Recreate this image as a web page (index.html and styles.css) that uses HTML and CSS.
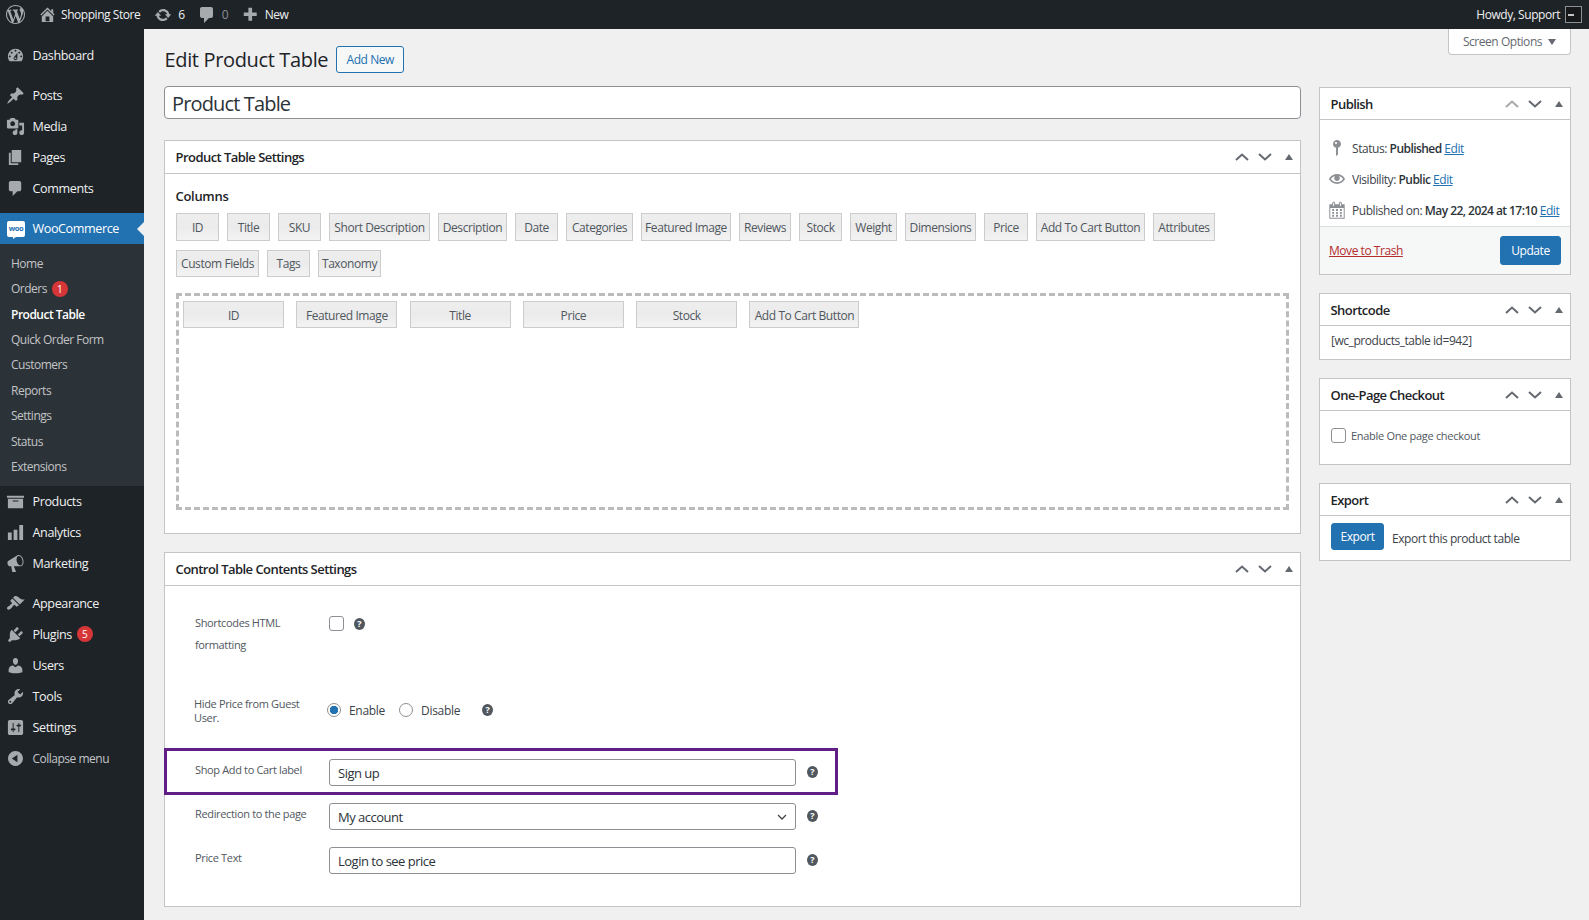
FILE: index.html
```html
<!DOCTYPE html>
<html lang="en">
<head>
  <meta charset="UTF-8">
  <title>Edit Product Table</title>
  <link rel="stylesheet" href="styles.css">
</head>
<body>
  <!-- Dashicons used around the page -->
  <svg class="icon-sprite" xmlns="http://www.w3.org/2000/svg">
    <symbol id="i-wp" viewBox="0 0 20 20"><path d="M20 10c0-5.51-4.49-10-10-10C4.48 0 0 4.49 0 10c0 5.52 4.48 10 10 10 5.51 0 10-4.48 10-10zM7.78 15.37L4.37 6.22c.55-.02 1.17-.08 1.17-.08.5-.06.44-1.13-.06-1.11 0 0-1.45.11-2.37.11-.18 0-.37 0-.58-.01C4.12 2.69 6.87 1.11 10 1.11c2.33 0 4.45.87 6.05 2.34-.68-.11-1.65.39-1.65 1.58 0 .74.45 1.36.9 2.1.35.61.55 1.36.55 2.46 0 1.49-1.4 5-1.4 5l-3.03-8.37c.54-.02.82-.17.82-.17.5-.05.44-1.25-.06-1.22 0 0-1.44.12-2.38.12-.87 0-2.33-.12-2.33-.12-.5-.03-.56 1.2-.06 1.22l.92.08 1.26 3.41zM17.41 10c.24-.64.74-1.87.43-4.25.7 1.29 1.05 2.71 1.05 4.25 0 3.29-1.73 6.24-4.4 7.78.97-2.59 1.94-5.2 2.92-7.78zM6.1 18.09C3.12 16.65 1.11 13.53 1.11 10c0-1.3.23-2.48.72-3.59C3.25 10.3 4.67 14.2 6.1 18.09zm4.03-6.63l2.58 6.98c-.86.29-1.76.45-2.71.45-.79 0-1.57-.11-2.29-.33.81-2.38 1.62-4.74 2.42-7.1z"/></symbol>
    <symbol id="i-home" viewBox="0 0 20 20"><path d="M16 8.5l1.53 1.53-1.06 1.06L10 4.62l-6.47 6.47-1.06-1.06L10 2.5l4 4v-2h2v4zm-6-2.46l6 5.99V18H4v-5.97zM12 17v-5H8v5h4z"/></symbol>
    <symbol id="i-update" viewBox="0 0 20 20"><path d="M10.2 3.28c3.53 0 6.43 2.61 6.92 6h2.08l-3.5 4-3.5-4h2.32c-.45-1.97-2.21-3.44-4.32-3.44-1.45 0-2.73.71-3.54 1.78L4.95 5.66C6.23 4.2 8.11 3.28 10.2 3.28zm-.4 13.44c-3.52 0-6.43-2.61-6.92-6H.8l3.5-4c1.17 1.33 2.33 2.67 3.5 4H5.48c.45 1.97 2.21 3.44 4.32 3.44 1.45 0 2.73-.71 3.54-1.78l1.71 1.95c-1.28 1.46-3.15 2.39-5.25 2.39z"/></symbol>
    <symbol id="i-comment" viewBox="0 0 20 20"><path d="M5 2h9c1.1 0 2 .9 2 2v7c0 1.1-.9 2-2 2h-2l-5 5v-5H5c-1.1 0-2-.9-2-2V4c0-1.1.9-2 2-2z"/></symbol>
    <symbol id="i-plus" viewBox="0 0 20 20"><path d="M17 8v4h-5v5H8v-5H3V8h5V3h4v5h5z"/></symbol>
    <symbol id="i-dashboard" viewBox="0 0 20 20"><path d="M3.76 16h12.48c1.1-1.37 1.76-3.11 1.76-5 0-4.42-3.58-8-8-8s-8 3.58-8 8c0 1.89.66 3.63 1.76 5zM10 4c.55 0 1 .45 1 1s-.45 1-1 1-1-.45-1-1 .45-1 1-1zM6 6c.55 0 1 .45 1 1s-.45 1-1 1-1-.45-1-1 .45-1 1-1zm8 0c.55 0 1 .45 1 1s-.45 1-1 1-1-.45-1-1 .45-1 1-1zm-5.37 5.55L12 7v6c0 1.1-.9 2-2 2s-2-.9-2-2c0-.57.24-1.08.63-1.45zM4 10c.55 0 1 .45 1 1s-.45 1-1 1-1-.45-1-1 .45-1 1-1zm12 0c.55 0 1 .45 1 1s-.45 1-1 1-1-.45-1-1 .45-1 1-1zm-5 3c0-.55-.45-1-1-1s-1 .45-1 1 .45 1 1 1 1-.45 1-1z"/></symbol>
    <symbol id="i-pin" viewBox="0 0 20 20"><path d="M10.44 3.02l1.82-1.82 6.36 6.35-1.83 1.82c-1.05-.68-2.48-.57-3.41.36l-.75.75c-.92.93-1.04 2.35-.35 3.41l-1.83 1.82-2.41-2.41-2.8 2.79c-.42.42-3.38 2.71-3.8 2.29s1.86-3.39 2.28-3.81l2.79-2.79L4.1 9.36l1.83-1.82c1.05.69 2.48.57 3.4-.36l.75-.75c.93-.92 1.05-2.35.36-3.41z"/></symbol>
    <symbol id="i-media" viewBox="0 0 20 20"><path d="M13 11V4c0-.55-.45-1-1-1h-1.67L9 1H5L3.67 3H2c-.55 0-1 .45-1 1v7c0 .55.45 1 1 1h10c.55 0 1-.45 1-1zM7 4.5c1.38 0 2.5 1.12 2.5 2.5S8.38 9.5 7 9.5 4.5 8.38 4.5 7 5.62 4.5 7 4.5zM14 6h5v10.5c0 1.38-1.12 2.5-2.5 2.5S14 17.88 14 16.5s1.12-2.5 2.5-2.5c.17 0 .34.02.5.05V9h-3V6zm-4 8.05V13h2v3.5c0 1.38-1.12 2.5-2.5 2.5S7 17.88 7 16.5 8.12 14 9.5 14c.17 0 .34.02.5.05z"/></symbol>
    <symbol id="i-page" viewBox="0 0 20 20"><path d="M6 15V2h10v13H6zm-1 1h8v2H3V5h2v11z"/></symbol>
    <symbol id="i-archive" viewBox="0 0 20 20"><path d="M19 4v2H1V4h18zM2 7h16v10H2V7zm11 3V9H7v1h6z"/></symbol>
    <symbol id="i-chart" viewBox="0 0 20 20"><path d="M18 18V2h-4v16h4zm-6 0V7H8v11h4zm-6 0v-8H2v8h4z"/></symbol>
    <symbol id="i-megaphone" viewBox="0 0 20 20"><path d="M18.15 5.94c.46 1.62.38 3.22-.02 4.48-.42 1.28-1.26 2.18-2.3 2.48-.16.06-.26.06-.4.06-.06.02-.12.02-.18.02-.06.02-.14.02-.22.02H8.23l2.22 5.5c.02.14-.06.26-.14.34-.08.1-.24.16-.34.16H6.95c-.1 0-.26-.06-.34-.16-.08-.08-.16-.2-.14-.34l-1-5.5H4.25c-.5.06-1.08-.18-1.54-.62s-.88-1.08-1.06-1.88c-.24-.8-.2-1.56-.02-2.2.18-.62.58-1.08 1.06-1.3l9.02-5.42c.1-.06.18-.1.24-.16.06-.04.14-.08.24-.12.16-.08.28-.12.5-.18 1.04-.3 2.24.1 3.22.98s1.84 2.24 2.26 3.86zm-2.58 5.98c.4-.1.74-.34 1.04-.7.58-.7.86-1.76.86-3.04 0-.64-.1-1.3-.28-1.98-.34-1.36-1.02-2.5-1.78-3.24s-1.68-1.1-2.46-.88c-.38.08-.7.34-.98.7-.6.7-.88 1.76-.88 3.04 0 .64.1 1.3.28 1.98.34 1.36 1.02 2.5 1.8 3.24.78.72 1.68 1.08 2.4.88z"/></symbol>
    <symbol id="i-brush" viewBox="0 0 20 20"><path d="M14.48 11.06L7.41 3.99l1.5-1.5c.5-.56 2.3-.47 3.51.32 1.21.8 1.43 1.28 2.91 2.1 1.18.64 2.45 1.26 4.45.85zm-.71.71L6.7 4.7 4.93 6.47c-.39.39-.39 1.02 0 1.41l1.06 1.06c.39.39.39 1.03 0 1.42-.6.6-1.43 1.11-2.21 1.69-.35.26-.7.53-1.01.84C1.43 13.23.4 14.99 1.49 16.08c1.09 1.08 2.85.05 4.18-1.28.2-.2.38-.4.55-.62.65-.84 1.25-1.62 1.86-2.23.38-.39 1.01-.39 1.4 0l1.06 1.06c.39.39 1.02.39 1.41 0z"/></symbol>
    <symbol id="i-plugin" viewBox="0 0 20 20"><path d="M13.11 4.36L9.87 7.6 8 5.73l3.24-3.24c.35-.34 1.05-.2 1.56.32.52.51.66 1.21.31 1.55zm-8 1.77l.91-1.12 9.01 9.01-1.19.84c-.71.71-2.63 1.16-3.82 1.16H6.14L4.9 17.26c-.59.59-1.54.59-2.12 0-.59-.58-.59-1.53 0-2.12l1.24-1.24v-3.88c0-1.13.4-3.19 1.09-3.89zm7.26 3.97l3.24-3.24c.34-.35 1.04-.21 1.55.31.52.51.66 1.21.31 1.55l-3.24 3.25z"/></symbol>
    <symbol id="i-users" viewBox="0 0 20 20"><path d="M10 9.25c-2.27 0-2.73-3.44-2.73-3.44C7 4.02 7.82 2 9.97 2c2.16 0 2.98 2.02 2.71 3.81 0 0-.41 3.44-2.68 3.44zm0 2.57L12.72 10c2.39 0 4.52 2.33 4.52 4.53v2.49s-3.65 1.13-7.24 1.13c-3.65 0-7.24-1.13-7.24-1.13v-2.49c0-2.25 1.94-4.48 4.47-4.48z"/></symbol>
    <symbol id="i-tools" viewBox="0 0 20 20"><path d="M16.68 9.77c-1.34 1.34-3.3 1.67-4.95.99l-5.41 6.52c-.99.99-2.59.99-3.58 0s-.99-2.59 0-3.57l6.52-5.42c-.68-1.65-.35-3.61.99-4.95 1.28-1.28 3.12-1.62 4.72-1.06l-2.89 2.89 2.82 2.82 2.86-2.87c.53 1.58.18 3.39-1.08 4.65zM3.81 16.21c.4.39 1.04.39 1.43 0 .4-.4.4-1.04 0-1.43-.39-.4-1.03-.4-1.43 0-.39.39-.39 1.03 0 1.43z"/></symbol>
    <symbol id="i-settings" viewBox="0 0 20 20"><path d="M18 16V4c0-1.1-.9-2-2-2H4c-1.1 0-2 .9-2 2v12c0 1.1.9 2 2 2h12c1.1 0 2-.9 2-2zM8 11h1c.55 0 1 .45 1 1s-.45 1-1 1H8v1.5c0 .28-.22.5-.5.5s-.5-.22-.5-.5V13H6c-.55 0-1-.45-1-1s.45-1 1-1h1V5.5c0-.28.22-.5.5-.5s.5.22.5.5V11zm5-2h-1c-.55 0-1-.45-1-1s.45-1 1-1h1V5.5c0-.28.22-.5.5-.5s.5.22.5.5V7h1c.55 0 1 .45 1 1s-.45 1-1 1h-1v5.5c0 .28-.22.5-.5.5s-.5-.22-.5-.5V9z"/></symbol>
    <symbol id="i-collapse" viewBox="0 0 20 20"><path d="M10 2.16c4.33 0 7.84 3.51 7.84 7.84s-3.51 7.84-7.84 7.84S2.16 14.33 2.16 10 5.71 2.16 10 2.16zm2 11.72V6.12L6.18 9.97z"/></symbol>
    <symbol id="i-status" viewBox="0 0 20 20"><path d="M14 6c0 1.86-1.28 3.41-3 3.86V16c0 1-2 2-2 2V9.86C7.28 9.41 6 7.86 6 6c0-2.21 1.79-4 4-4s4 1.79 4 4zM8 5c0 .55.45 1 1 1s1-.45 1-1-.45-1-1-1-1 .45-1 1z"/></symbol>
    <symbol id="i-eye" viewBox="0 0 20 20"><path d="M19.7 9.4C17.7 6 14 3.9 10 3.9S2.3 6 .3 9.4L0 10l.3.6c2 3.4 5.7 5.5 9.7 5.5s7.7-2.1 9.7-5.5l.3-.6-.3-.6zM10 14.1c-3.1 0-6-1.6-7.7-4.1C3.6 8 5.7 6.6 8 6.1c-.9.6-1.5 1.7-1.5 2.9 0 1.9 1.6 3.5 3.5 3.5s3.5-1.6 3.5-3.5c0-1.2-.6-2.3-1.5-2.9 2.3.5 4.4 1.9 5.7 3.9-1.7 2.5-4.6 4.1-7.7 4.1z"/></symbol>
    <symbol id="i-calendar" viewBox="0 0 20 20"><path d="M15 4h3v15H2V4h3V3c0-.41.15-.76.44-1.06.29-.29.65-.44 1.06-.44s.77.15 1.06.44c.29.3.44.65.44 1.06v1h4V3c0-.41.15-.76.44-1.06.29-.29.65-.44 1.06-.44s.77.15 1.06.44c.29.3.44.65.44 1.06v1zM6 3v2.5c0 .14.05.26.15.36.09.09.21.14.35.14s.26-.05.35-.14c.1-.1.15-.22.15-.36V3c0-.14-.05-.26-.15-.35-.09-.1-.21-.15-.35-.15s-.26.05-.35.15c-.1.09-.15.21-.15.35zm7 0v2.5c0 .14.05.26.14.36.1.09.22.14.36.14s.26-.05.36-.14c.09-.1.14-.22.14-.36V3c0-.14-.05-.26-.14-.35-.1-.1-.22-.15-.36-.15s-.26.05-.36.15c-.09.09-.14.21-.14.35zm4 15V8H3v10h14zM7 9v2H5V9h2zm2 0h2v2H9V9zm4 2V9h2v2h-2zm-6 1v2H5v-2h2zm2 0h2v2H9v-2zm4 2v-2h2v2h-2zm-6 1v2H5v-2h2zm4 2H9v-2h2v2zm4 0h-2v-2h2v2z"/></symbol>
    <symbol id="i-up" viewBox="0 0 14 8"><path d="M1 7l6-5.5L13 7" fill="none" stroke="currentColor" stroke-width="2"/></symbol>
    <symbol id="i-down" viewBox="0 0 14 8"><path d="M1 1l6 5.5L13 1" fill="none" stroke="currentColor" stroke-width="2"/></symbol>
  </svg>

  <!-- Admin bar -->
  <header class="adminbar">
    <svg class="bar-logo"><use href="#i-wp"/></svg>
    <svg class="bar-home"><use href="#i-home"/></svg>
    <a class="bar-site" href="#">Shopping Store</a>
    <svg class="bar-update"><use href="#i-update"/></svg>
    <span class="bar-count bar-six">6</span>
    <svg class="bar-comment"><use href="#i-comment"/></svg>
    <span class="bar-count bar-zero">0</span>
    <svg class="bar-plus"><use href="#i-plus"/></svg>
    <a class="bar-new" href="#">New</a>
    <span class="bar-howdy">Howdy, Support</span>
    <span class="bar-avatar"></span>
  </header>

  <div class="wrap">
    <!-- Sidebar -->
    <aside class="sidebar">
      <ul class="menu menu-first">
        <li><svg><use href="#i-dashboard"/></svg>Dashboard</li>
      </ul>
      <ul class="menu">
        <li><svg><use href="#i-pin"/></svg>Posts</li>
        <li><svg><use href="#i-media"/></svg>Media</li>
        <li><svg><use href="#i-page"/></svg>Pages</li>
        <li><svg><use href="#i-comment"/></svg>Comments</li>
      </ul>
      <div class="menu-active">
        <span class="woo-icon">woo</span>WooCommerce
      </div>
      <ul class="submenu">
        <li>Home</li>
        <li>Orders <span class="badge">1</span></li>
        <li class="current">Product Table</li>
        <li>Quick Order Form</li>
        <li>Customers</li>
        <li>Reports</li>
        <li>Settings</li>
        <li>Status</li>
        <li>Extensions</li>
      </ul>
      <ul class="menu menu-after">
        <li><svg><use href="#i-archive"/></svg>Products</li>
        <li><svg><use href="#i-chart"/></svg>Analytics</li>
        <li><svg><use href="#i-megaphone"/></svg>Marketing</li>
      </ul>
      <ul class="menu">
        <li><svg><use href="#i-brush"/></svg>Appearance</li>
        <li><svg><use href="#i-plugin"/></svg>Plugins <span class="badge">5</span></li>
        <li><svg><use href="#i-users"/></svg>Users</li>
        <li><svg><use href="#i-tools"/></svg>Tools</li>
        <li><svg><use href="#i-settings"/></svg>Settings</li>
        <li class="collapse"><svg><use href="#i-collapse"/></svg>Collapse menu</li>
      </ul>
    </aside>

    <main class="content">
      <div class="page-head">
        <h1>Edit Product Table</h1>
        <a class="add-new" href="#">Add New</a>
        <button class="screen-options">Screen Options <span class="caret"></span></button>
      </div>

      <div class="columns">
        <!-- Left column -->
        <div class="col-main">
          <input class="title-input" type="text" value="Product Table">

          <section class="box box-settings">
            <div class="box-head">
              <h2>Product Table Settings</h2>
              <div class="handles">
                <svg class="h-up"><use href="#i-up"/></svg>
                <svg class="h-down"><use href="#i-down"/></svg>
                <span class="h-toggle"></span>
              </div>
            </div>
            <div class="settings-body">
              <h3>Columns</h3>
              <div class="tag-list">
                <span class="tag" style="width:43px">ID</span>
                <span class="tag" style="width:43px">Title</span>
                <span class="tag" style="width:43px">SKU</span>
                <span class="tag" style="width:101px">Short Description</span>
                <span class="tag" style="width:69px">Description</span>
                <span class="tag" style="width:43px">Date</span>
                <span class="tag" style="width:67px">Categories</span>
                <span class="tag" style="width:90px">Featured Image</span>
                <span class="tag" style="width:52px">Reviews</span>
                <span class="tag" style="width:43px">Stock</span>
                <span class="tag" style="width:47px">Weight</span>
                <span class="tag" style="width:71px">Dimensions</span>
                <span class="tag" style="width:44px">Price</span>
                <span class="tag" style="width:109px">Add To Cart Button</span>
                <span class="tag" style="width:62px">Attributes</span>
                <span class="tag tag-short" style="width:83px">Custom Fields</span>
                <span class="tag tag-short" style="width:43px">Tags</span>
                <span class="tag tag-short" style="width:63px">Taxonomy</span>
              </div>
              <div class="drop-zone">
                <span class="tag tag-wide">ID</span>
                <span class="tag tag-wide">Featured Image</span>
                <span class="tag tag-wide">Title</span>
                <span class="tag tag-wide">Price</span>
                <span class="tag tag-wide">Stock</span>
                <span class="tag tag-wide tag-last">Add To Cart Button</span>
              </div>
            </div>
          </section>

          <section class="box box-contents">
            <div class="box-head">
              <h2>Control Table Contents Settings</h2>
              <div class="handles">
                <svg class="h-up"><use href="#i-up"/></svg>
                <svg class="h-down"><use href="#i-down"/></svg>
                <span class="h-toggle"></span>
              </div>
            </div>
            <div class="contents-body">
              <div class="field field-shortcodes">
                <label class="field-label">Shortcodes HTML formatting</label>
                <input class="check" type="checkbox">
                <span class="help">?</span>
              </div>
              <div class="field field-hide">
                <label class="field-label">Hide Price from Guest User.</label>
                <label class="radio"><input type="radio" name="hide_price" checked>Enable</label>
                <label class="radio"><input type="radio" name="hide_price">Disable</label>
                <span class="help">?</span>
              </div>
              <div class="field field-marked">
                <label class="field-label">Shop Add to Cart label</label>
                <input class="text-input" type="text" value="Sign up">
                <span class="help">?</span>
              </div>
              <div class="field">
                <label class="field-label">Redirection to the page</label>
                <select class="text-input select-input"><option>My account</option></select>
                <span class="help">?</span>
              </div>
              <div class="field">
                <label class="field-label">Price Text</label>
                <input class="text-input" type="text" value="Login to see price">
                <span class="help">?</span>
              </div>
            </div>
          </section>
        </div>

        <!-- Right column -->
        <div class="col-side">
          <section class="box">
            <div class="box-head">
              <h2>Publish</h2>
              <div class="handles">
                <svg class="h-up h-off"><use href="#i-up"/></svg>
                <svg class="h-down"><use href="#i-down"/></svg>
                <span class="h-toggle"></span>
              </div>
            </div>
            <div class="publish-rows">
              <div class="pub-row"><svg class="pub-status"><use href="#i-status"/></svg><span>Status: <b>Published</b> <a href="#">Edit</a></span></div>
              <div class="pub-row"><svg><use href="#i-eye"/></svg><span>Visibility: <b>Public</b> <a href="#">Edit</a></span></div>
              <div class="pub-row"><svg class="pub-cal"><use href="#i-calendar"/></svg><span>Published on: <b>May 22, 2024 at 17:10</b> <a href="#">Edit</a></span></div>
            </div>
            <div class="publish-foot">
              <a class="trash" href="#">Move to Trash</a>
              <button class="btn-primary btn-update">Update</button>
            </div>
          </section>

          <section class="box">
            <div class="box-head">
              <h2>Shortcode</h2>
              <div class="handles">
                <svg class="h-up"><use href="#i-up"/></svg>
                <svg class="h-down"><use href="#i-down"/></svg>
                <span class="h-toggle"></span>
              </div>
            </div>
            <div class="shortcode-body">[wc_products_table id=942]</div>
          </section>

          <section class="box">
            <div class="box-head">
              <h2>One-Page Checkout</h2>
              <div class="handles">
                <svg class="h-up"><use href="#i-up"/></svg>
                <svg class="h-down"><use href="#i-down"/></svg>
                <span class="h-toggle"></span>
              </div>
            </div>
            <label class="checkout-body"><input class="check" type="checkbox">Enable One page checkout</label>
          </section>

          <section class="box">
            <div class="box-head">
              <h2>Export</h2>
              <div class="handles">
                <svg class="h-up"><use href="#i-up"/></svg>
                <svg class="h-down"><use href="#i-down"/></svg>
                <span class="h-toggle"></span>
              </div>
            </div>
            <div class="export-body">
              <button class="btn-primary btn-export">Export</button>
              <span>Export this product table</span>
            </div>
          </section>
        </div>
      </div>
    </main>
  </div>
</body>
</html>
```

FILE: styles.css
```css
/* General */
* {
  box-sizing: border-box;
}

html,
body {
  height: 920px;
  overflow: hidden;
}

body {
  margin: 0;
  background: #f0f0f1;
  color: #3c434a;
  font-family: "Open Sans", "Noto Sans", sans-serif;
  font-size: 12px;
  letter-spacing: -0.45px;
}

a {
  color: #2271b1;
}

ul {
  list-style: none;
  margin: 0;
  padding: 0;
}

.icon-sprite {
  display: none;
}

/* Admin bar */
.adminbar {
  display: flex;
  align-items: center;
  height: 29px;
  background: #1d2327;
  color: #f0f0f1;
  fill: #a7aaad;
  font-size: 12px;
  padding: 0 7px 0 6px;
}

.adminbar a {
  color: #f0f0f1;
  text-decoration: none;
}

.bar-logo {
  width: 19px;
  height: 19px;
}

.bar-home {
  width: 19px;
  height: 19px;
  margin-left: 12.5px;
}

.bar-site {
  margin-left: 4.5px;
}

.bar-update {
  width: 18px;
  height: 18px;
  margin-left: 14px;
}

.bar-count {
  margin-left: 4.5px;
}

.bar-six {
  margin-left: 6px;
}

.bar-zero {
  color: #8c8f94;
}

.bar-comment {
  width: 20px;
  height: 20px;
  margin-left: 12.5px;
}

.bar-plus {
  width: 18.5px;
  height: 18.5px;
  margin-left: 13px;
}

.bar-new {
  margin-left: 5px;
}

.bar-howdy {
  margin-left: auto;
}

.bar-avatar {
  width: 17px;
  height: 17px;
  margin-left: 5px;
  border: 1px solid #8c8f94;
  background: #16181a linear-gradient(#c3c4c7, #c3c4c7) no-repeat 2px center / 6px 2px;
}

/* Layout */
.wrap {
  display: flex;
  height: 891px;
}

.sidebar {
  width: 144px;
  flex-shrink: 0;
  background: #1d2327;
  color: #f0f0f1;
  font-size: 12.6px;
  letter-spacing: -0.4px;
}

.content {
  flex: 1;
  padding: 0 18px 0 20px;
}

.columns {
  display: grid;
  grid-template-columns: 1137px 252px;
  column-gap: 18px;
}

/* Sidebar */
.menu {
  margin-bottom: 9px;
}

.menu-first {
  padding-top: 11px;
}

.menu li {
  display: flex;
  align-items: center;
  height: 31px;
  padding-left: 6px;
}

.menu svg {
  width: 19px;
  height: 19px;
  margin-right: 7.5px;
  fill: #a7aaad;
  flex-shrink: 0;
}

.menu-active {
  position: relative;
  display: flex;
  align-items: center;
  height: 31px;
  margin-top: 9px;
  background: #2271b1;
  color: #fff;
  padding-left: 7px;
}

.menu-active::after {
  content: "";
  position: absolute;
  right: 0;
  top: 9px;
  border: 7px solid transparent;
  border-left: 0;
  border-right-color: #f0f0f1;
}

.woo-icon {
  position: relative;
  width: 18px;
  height: 16px;
  margin-right: 7.5px;
  background: #fff;
  border-radius: 2px;
  color: #2271b1;
  font-size: 7.5px;
  font-weight: 700;
  line-height: 15px;
  text-align: center;
}

.woo-icon::after {
  content: "";
  position: absolute;
  left: 6px;
  bottom: -2px;
  border-top: 2px solid #fff;
  border-right: 3px solid transparent;
}

.submenu {
  background: #2c3338;
  color: #c3c4c7;
  font-size: 12px;
  letter-spacing: -0.5px;
  padding: 6.7px 0 6.7px 11px;
}

.submenu li {
  display: flex;
  align-items: center;
  height: 25.4px;
}

.submenu .current {
  color: #fff;
  font-weight: 600;
}

.badge {
  display: inline-block;
  width: 16px;
  height: 16px;
  margin-left: 5px;
  border-radius: 50%;
  background: #d63638;
  color: #fff;
  font-size: 10px;
  line-height: 16px;
  text-align: center;
  letter-spacing: 0;
}

.menu .collapse {
  color: #c3c4c7;
  font-size: 12px;
  letter-spacing: -0.5px;
}

/* Page heading */
.page-head {
  display: flex;
  align-items: flex-start;
  height: 57px;
}

h1 {
  margin: 16px 0 0 0.5px;
  color: #1d2327;
  font-size: 20px;
  font-weight: 400;
  line-height: 30px;
  letter-spacing: -0.35px;
}

.add-new {
  margin: 17px 0 0 8px;
  height: 27px;
  width: 68px;
  border: 1px solid #2271b1;
  border-radius: 3px;
  background: #f6f7f7;
  font-size: 12px;
  line-height: 25px;
  text-align: center;
  text-decoration: none;
}

.screen-options {
  display: flex;
  align-items: center;
  justify-content: center;
  gap: 6px;
  width: 123px;
  height: 26px;
  margin-left: auto;
  border: 1px solid #c3c4c7;
  border-top: 0;
  border-radius: 0 0 4px 4px;
  background: #fff;
  color: #646970;
  font: inherit;
  letter-spacing: inherit;
}

.caret {
  border: 4px solid transparent;
  border-top: 6px solid #646970;
  border-bottom: 0;
}

.title-input {
  display: block;
  width: 100%;
  height: 33px;
  margin-bottom: 21px;
  border: 1px solid #8c8f94;
  border-radius: 4px;
  padding: 2px 7px 0;
  background: #fff;
  color: #2c3338;
  font: inherit;
  font-size: 20px;
  letter-spacing: -0.85px;
}

/* Meta boxes */
.box {
  background: #fff;
  border: 1px solid #c3c4c7;
  margin-bottom: 18px;
}

.box-head {
  display: flex;
  align-items: center;
  justify-content: space-between;
  height: 33px;
  border-bottom: 1px solid #c3c4c7;
  padding: 0 7px 0 10.5px;
}

.col-side .box-head {
  height: 32px;
}

.box-head h2 {
  margin: 0;
  color: #1d2327;
  font-size: 13px;
  font-weight: 600;
  letter-spacing: -0.55px;
}

.handles {
  display: flex;
  align-items: center;
  gap: 10px;
  color: #646970;
}

.handles svg {
  width: 14px;
  height: 8px;
}

.h-up {
  margin-right: -1px;
}

.h-off {
  color: #a7aaad;
}

.h-toggle {
  margin-left: 3px;
  border: 4px solid transparent;
  border-top: 0;
  border-bottom: 6px solid #646970;
}

/* Product Table Settings */
.box-settings {
  height: 394px;
}

.settings-body {
  padding: 14px 11px 0;
}

h3 {
  margin: 0 0 9px -0.5px;
  color: #1d2327;
  font-size: 13px;
  font-weight: 600;
  line-height: 16px;
  letter-spacing: -0.3px;
}

.tag-list {
  display: flex;
  flex-wrap: wrap;
  gap: 9px 8px;
}

.tag {
  display: block;
  height: 28px;
  border: 1px solid #ccc;
  background: linear-gradient(#eeeeee, #ebebeb 50%, #f3f3f3);
  color: #50575e;
  font-size: 12px;
  line-height: 27px;
  text-align: center;
  white-space: nowrap;
  letter-spacing: -0.42px;
}

.tag-short {
  height: 27px;
  line-height: 25px;
  margin-bottom: 1px;
}

.drop-zone {
  display: flex;
  gap: 12.3px;
  height: 217px;
  margin-top: 15px;
  border: 3px dashed #bbb;
  padding: 5px 4px;
}

.tag-wide {
  width: 101px;
  height: 27px;
}

.tag-last {
  width: 110px;
}

/* Control Table Contents Settings */
.box-contents {
  height: 355px;
  margin-bottom: 0;
}

.contents-body {
  padding-top: 26px;
}

.field {
  display: flex;
  align-items: flex-start;
  width: 674px;
  height: 44px;
  margin-left: -1px;
  padding: 8px 0 0 31px;
}

.field-label {
  width: 134px;
  flex-shrink: 0;
  padding: 3px 8px 0 0;
  color: #50575e;
  font-size: 11px;
  line-height: 16px;
  letter-spacing: -0.35px;
}

.field-shortcodes {
  height: 85px;
  padding-top: 0;
}

.field-shortcodes .field-label {
  padding-top: 0;
  line-height: 22px;
}

.field-shortcodes .check {
  margin-top: 4px;
}

.field-shortcodes .help {
  margin: 6px 0 0 10px;
}

.field-hide {
  height: 51px;
  padding-top: 0;
}

.field-hide .field-label {
  margin-left: -1px;
  padding-top: 0;
  line-height: 14px;
}

.field-hide .help {
  margin: 7px 0 0 7px;
}

.field-marked {
  height: 47px;
  padding-top: 11px;
  outline: 3px solid #5f1f87;
  outline-offset: -3px;
}

.check {
  appearance: none;
  width: 15px;
  height: 15px;
  margin: 0;
  border: 1px solid #8c8f94;
  border-radius: 3px;
  background: #fff;
  flex-shrink: 0;
}

.radio {
  display: flex;
  align-items: center;
  gap: 8px;
  height: 26px;
  margin-right: 15px;
  color: #3c434a;
  font-size: 12px;
  letter-spacing: -0.3px;
}

.radio input {
  appearance: none;
  display: block;
  width: 14px;
  height: 14px;
  margin: 0 0 0 -1px;
  border: 1px solid #8c8f94;
  border-radius: 50%;
  background: #fff;
}

.radio input:checked {
  background: radial-gradient(circle, #2271b1 0 4px, #fff 4.5px);
}

.text-input {
  width: 467px;
  height: 27px;
  margin: 0;
  border: 1px solid #8c8f94;
  border-radius: 3px;
  padding: 0 8px;
  background: #fff;
  color: #2c3338;
  font: inherit;
  font-size: 13px;
  letter-spacing: -0.5px;
}

.select-input {
  appearance: none;
  background: #fff url("data:image/svg+xml,%3Csvg xmlns='http://www.w3.org/2000/svg' width='10' height='6'%3E%3Cpath d='M1 1l4 4 4-4' fill='none' stroke='%23444' stroke-width='1.3'/%3E%3C/svg%3E") no-repeat right 8px center;
}

.help {
  width: 11px;
  height: 12px;
  margin: 7px 0 0 11px;
  border-radius: 50%;
  background: #50575e;
  color: #fff;
  font-size: 9px;
  font-weight: 700;
  line-height: 12px;
  text-align: center;
  letter-spacing: 0;
}

/* Side boxes */
.col-side {
  padding-top: 1px;
}

.publish-rows {
  height: 106px;
  padding-top: 12.5px;
}

.pub-row {
  display: flex;
  align-items: center;
  gap: 7px;
  height: 31px;
  padding-left: 9px;
  font-size: 12px;
}

.pub-row svg {
  width: 16px;
  height: 16px;
  fill: #8c8f94;
  flex-shrink: 0;
  overflow: visible;
}

.pub-row .pub-status {
  transform: scale(1.25);
}

.pub-row .pub-cal {
  transform: scale(1.2);
}

.pub-row b {
  color: #2c3338;
  font-weight: 600;
  letter-spacing: -0.55px;
}

.publish-foot {
  display: flex;
  align-items: center;
  justify-content: space-between;
  height: 48px;
  border-top: 1px solid #dcdcde;
  background: #f6f7f7;
  padding: 0 9px;
}

.trash {
  color: #b32d2e;
}

.btn-primary {
  border: 1px solid #2271b1;
  border-radius: 3px;
  background: #2271b1;
  color: #fff;
  font: inherit;
  letter-spacing: inherit;
}

.btn-update {
  width: 61px;
  height: 29px;
}

.shortcode-body {
  height: 33px;
  padding-left: 11px;
  line-height: 30px;
  font-size: 12px;
}

.checkout-body {
  display: flex;
  align-items: center;
  gap: 5px;
  height: 53px;
  padding: 0 11px 5px;
  color: #50575e;
  font-size: 11px;
  letter-spacing: -0.3px;
}

.export-body {
  display: flex;
  align-items: center;
  gap: 8px;
  height: 44px;
  padding: 0 11px;
}

.btn-export {
  width: 53px;
  height: 27px;
  margin-top: -4px;
}
```
